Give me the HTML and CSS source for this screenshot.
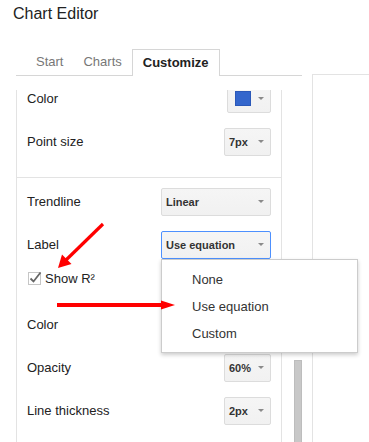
FILE: index.html
```html
<!DOCTYPE html>
<html>
<head>
<meta charset="utf-8">
<link rel="stylesheet" href="styles.css">
</head>
<body>
<div class="app">
  <h1 class="title">Chart Editor</h1>
  <div class="editor">
    <div class="left">
      <div class="tabs">
        <div class="tab">Start</div>
        <div class="tab">Charts</div>
        <div class="tab active">Customize</div>
      </div>
      <div class="body">
        <div class="panel">
          <div class="clip-row">
            <div class="row">
              <span class="label">Color</span>
              <div class="select swatch-select"><span class="swatch"></span><span class="caret"></span></div>
            </div>
          </div>
          <div class="row">
            <span class="label">Point size</span>
            <div class="select small"><span class="val">7px</span><span class="caret"></span></div>
          </div>
          <div class="sep"></div>
          <div class="row">
            <span class="label">Trendline</span>
            <div class="select wide"><span class="val">Linear</span><span class="caret"></span></div>
          </div>
          <div class="row">
            <span class="label">Label</span>
            <div class="anchor">
              <div class="select wide focused"><span class="val">Use equation</span><span class="caret"></span></div>
              <div class="menu">
                <div class="item">None</div>
                <div class="item">Use equation</div>
                <div class="item">Custom</div>
              </div>
            </div>
          </div>
          <div class="check-row">
            <svg class="checkbox" width="15" height="15" viewBox="0 0 15 15">
              <rect x="0.5" y="1.5" width="12" height="12" fill="#fff" stroke="#c6c6c6"/>
              <path d="M2.5 7.5 L5.5 10.5 L12.5 1.5" fill="none" stroke="#666" stroke-width="1.8"/>
            </svg>
            <span class="check-label">Show R²</span>
          </div>
          <div class="row">
            <span class="label">Color</span>
          </div>
          <div class="row">
            <span class="label">Opacity</span>
            <div class="select small"><span class="val">60%</span><span class="caret"></span></div>
          </div>
          <div class="row">
            <span class="label">Line thickness</span>
            <div class="select small"><span class="val">2px</span><span class="caret"></span></div>
          </div>
        </div>
        <div class="gutter"><div class="thumb"></div></div>
      </div>
    </div>
    <div class="preview"></div>
  </div>
  <svg class="arrows" width="369" height="442" viewBox="0 0 369 442">
    <line x1="103" y1="224" x2="65" y2="261" stroke="#f00" stroke-width="3.2"/>
    <polygon points="58,268 71.5,264 62,254.5" fill="#f00"/>
    <line x1="57" y1="305" x2="164" y2="305" stroke="#f00" stroke-width="4"/>
    <polygon points="161,300.5 175,305 161,309.5" fill="#f00"/>
  </svg>
</div>
</body>
</html>
```

FILE: styles.css
```css
html, body {
  margin: 0;
  padding: 0;
  overflow: hidden;
  background: #fff;
}

.app {
  position: relative;
  width: 369px;
  height: 442px;
  overflow: hidden;
  font-family: "Liberation Sans", Arial, sans-serif;
  color: #222;
}

.title {
  margin: 0 0 26px 0;
  padding: 5px 0 0 13px;
  font-size: 16px;
  font-weight: normal;
  line-height: 18px;
  color: #222;
}

.editor {
  display: flex;
  align-items: flex-start;
}

.left {
  margin-left: 16px;
  width: 296px;
  flex: none;
}

.tabs {
  width: 276px;
  height: 26px;
  padding-left: 10px;
  display: flex;
  border-bottom: 1px solid #d6d6d6;
}

.tab {
  padding: 0 10px;
  font-size: 13px;
  line-height: 26px;
  color: #777;
}

.tab.active {
  box-sizing: border-box;
  height: 27px;
  margin-bottom: -1px;
  border: 1px solid #d6d6d6;
  border-bottom: none;
  background: #fff;
  line-height: 25px;
  font-weight: bold;
  color: #222;
}

.body {
  display: flex;
  margin-top: 14px;
}

.panel {
  width: 264px;
  height: 360px;
  flex: none;
  display: flex;
  flex-direction: column;
  border-left: 1px solid #e3e3e3;
  border-right: 1px solid #e3e3e3;
}

.clip-row {
  height: 30px;
  flex: none;
  overflow: hidden;
  display: flex;
  flex-direction: column;
  justify-content: flex-end;
}

.row {
  height: 43px;
  flex: none;
  display: flex;
  align-items: center;
  justify-content: space-between;
  padding: 0 10px;
}

.label {
  font-size: 13px;
  color: #222;
}

.sep {
  flex: none;
  margin-top: 14px;
  margin-bottom: 2px;
  border-top: 1px solid #e3e3e3;
}

.anchor {
  position: relative;
}

.select {
  box-sizing: border-box;
  height: 28px;
  display: flex;
  align-items: center;
  justify-content: space-between;
  padding: 0 5px 0 4px;
  border: 1px solid #dcdcdc;
  border-radius: 2px;
  background: linear-gradient(#f5f5f5, #f1f1f1);
  font-size: 11px;
  font-weight: bold;
  color: #333;
}

.select.small {
  width: 47px;
}

.select.wide {
  width: 110px;
}

.select.focused {
  border-color: #4d90fe;
}

.swatch-select {
  width: 44px;
  padding-left: 7px;
}

.swatch {
  box-sizing: border-box;
  width: 16px;
  height: 15px;
  background: #3366cc;
  border: 1px solid #2a58b8;
}

.caret {
  width: 0;
  height: 0;
  margin-right: 1px;
  border-left: 3px solid transparent;
  border-right: 3px solid transparent;
  border-top: 3px solid #8a8a8a;
}

.menu {
  position: absolute;
  top: 100%;
  left: 0;
  z-index: 5;
  box-sizing: border-box;
  width: 197px;
  padding: 6px 0 5px 0;
  background: #fff;
  border: 1px solid rgba(0, 0, 0, 0.2);
  box-shadow: 0 2px 4px rgba(0, 0, 0, 0.2);
}

.item {
  height: 27px;
  line-height: 27px;
  padding-left: 30px;
  font-size: 13px;
  color: #333;
}

.check-row {
  box-sizing: border-box;
  height: 37px;
  flex: none;
  display: flex;
  align-items: flex-start;
  padding: 5px 10px 0 11px;
}

.checkbox {
  display: block;
  flex: none;
}

.check-label {
  margin-left: 2px;
  font-size: 13px;
  line-height: 15px;
  color: #222;
}

.gutter {
  width: 30px;
  height: 360px;
  flex: none;
}

.thumb {
  box-sizing: border-box;
  width: 8px;
  height: 100px;
  margin-top: 270px;
  margin-left: 12px;
  background: #c8c8c8;
  border: 1px solid #bdbdbd;
}

.preview {
  flex: 1;
  height: 400px;
  margin-top: 25px;
  border-top: 1px solid #e3e3e3;
  border-left: 1px solid #e3e3e3;
}

.arrows {
  position: absolute;
  left: 0;
  top: 0;
  z-index: 10;
  pointer-events: none;
}
```
